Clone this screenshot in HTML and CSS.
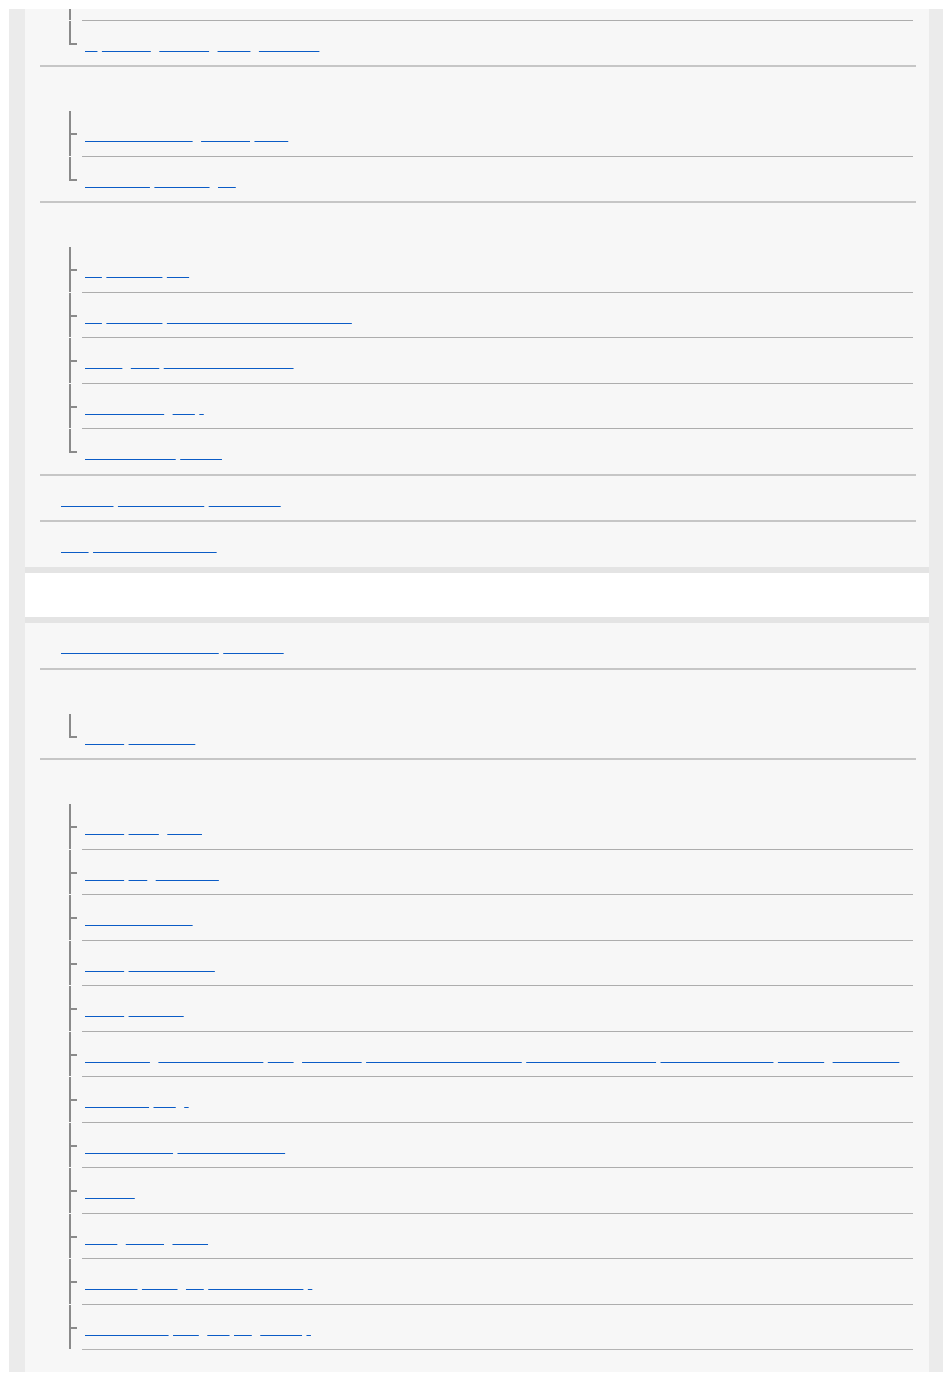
FILE: index.html
```html
<!DOCTYPE html>
<html lang="en">
<head>
    <meta charset="UTF-8">
    <meta name="viewport" content="width=device-width, initial-scale=1.0">
    <title>Help Guide - Contents</title>
    <link rel="stylesheet" href="styles.css">
</head>
<body>
    <div class="frame">
        <div class="panel panel-top">
            <ul class="toc">
                <li>
                    <ul class="sub">
                        <!-- end of the row above the view -->
                        <li class="tail"></li>
                        <li><a class="link" href="#"><span>Is</span> <span>battery</span> <span class="g">display</span> <span class="g">level</span> <span class="g">indicator</span></a></li>
                    </ul>
                </li>
                <li>
                    <span class="group-title">Charging</span>
                    <ul class="sub">
                        <li><a class="link" href="#"><span>Charging using</span> <span class="g">battery</span> <span>pack</span></a></li>
                        <li><a class="link" href="#"><span>Charging</span> <span>settings</span> <span class="g">on</span></a></li>
                    </ul>
                </li>
                <li>
                    <span class="group-title">Computer</span>
                    <ul class="sub">
                        <li><a class="link" href="#"><span>To</span> <span>connect</span> <span>the</span></a></li>
                        <li><a class="link" href="#"><span>To</span> <span>connect</span> <span>a computer via USB cable</span></a></li>
                        <li><a class="link" href="#"><span>Copy</span> <span class="g">files</span> <span>from the computer</span></a></li>
                        <li><a class="link" href="#"><span>Disconnect</span> <span class="g">the</span> <span>.</span></a></li>
                        <li><a class="link" href="#"><span>Notes on the</span> <span>music</span></a></li>
                    </ul>
                </li>
                <li><a class="link" href="#"><span>Playing</span> <span>downloaded</span> <span>from a PC</span></a></li>
                <li><a class="link" href="#"><span>The</span> <span>playback screens</span></a></li>
            </ul>
        </div>

        <h2 class="section-title">Basic operation</h2>

        <div class="panel panel-bottom">
            <ul class="toc">
                <li><a class="link" href="#"><span>Troubleshooting guide</span> <span>contents</span></a></li>
                <li>
                    <span class="group-title">Getting started</span>
                    <ul class="sub">
                        <li><a class="link" href="#"><span>Basic</span> <span>operation</span></a></li>
                    </ul>
                </li>
                <li>
                    <span class="group-title">Playback</span>
                    <ul class="sub cont">
                        <li><a class="link" href="#"><span>Basic</span> <span>hold</span> <span class="g">state</span></a></li>
                        <li><a class="link" href="#"><span>Basic</span> <span>for</span> <span class="g">playback</span></a></li>
                        <li><a class="link" href="#"><span>Connecting the</span></a></li>
                        <li><a class="link" href="#"><span>Basic</span> <span>adjustments</span></a></li>
                        <li><a class="link" href="#"><span>Basic</span> <span>settings</span></a></li>
                        <li><a class="link" href="#"><span>Charging</span> <span class="g">battery life and</span> <span>use</span> <span class="g">cautions</span> <span>when using the player</span> <span>cold environments</span> <span>or high humidity</span> <span>places</span> <span class="g">outdoors.</span></a></li>
                        <li><a class="link" href="#"><span>Updating</span> <span>the</span> <span class="g">.</span></a></li>
                        <li><a class="link" href="#"><span>Customizing</span> <span>sound settings.</span></a></li>
                        <li><a class="link" href="#"><span>Alarms</span></a></li>
                        <li><a class="link" href="#"><span>Turn</span> <span class="g">sleep</span> <span class="g">timer</span></a></li>
                        <li><a class="link" href="#"><span>Playing</span> <span>radio</span> <span class="g">on</span> <span>other devices</span> <span>.</span></a></li>
                        <li><a class="link" href="#"><span>Restrictions</span> <span>use</span> <span class="g">the</span> <span>on</span> <span class="g">flights</span> <span>.</span></a></li>
                    </ul>
                </li>
            </ul>
        </div>
    </div>
</body>
</html>
```

FILE: styles.css
```css
* {
    box-sizing: border-box;
}
html, body {
    margin: 0;
}
body {
    padding: 9px 7px 7px 9px;
    background: #fff;
    font-family: "Liberation Sans", Arial, sans-serif;
    font-size: 16px;
    line-height: 22px;
    color: transparent;
}
.frame {
    background: #ebebeb;
    padding: 0 14px 0 16px;
}
.panel {
    background: #f7f7f7;
    overflow: hidden;
}
.panel-top {
    border-bottom: 6px solid #e4e4e4;
}
.panel-bottom {
    border-top: 6px solid #e4e4e4;
    padding-bottom: 22px;
}
.section-title {
    margin: 0;
    background: #fff;
    font-size: 16px;
    font-weight: normal;
    line-height: 22px;
    padding: 9px 21px 13.5px 36px;
}
.toc {
    list-style: none;
    margin: 0 13px 0 15px;
    padding: 0;
}
.toc > li {
    border-bottom: 2px solid #c6c6c6;
}
.toc > li:last-child {
    border-bottom: none;
}
.group-title {
    display: block;
    padding: 9px 4px 13px 21px;
}
.link {
    display: block;
    padding: 13px 4px 9.5px 21px;
    color: transparent;
    text-decoration: none;
    white-space: nowrap;
}
.link span {
    text-decoration: underline;
    text-decoration-color: #0b5cc6;
    text-decoration-thickness: 1px;
    text-decoration-skip-ink: none;
}
.link .g {
    margin-left: 4px;
}
.sub {
    list-style: none;
    margin: 0 3px 0 42px;
    padding: 0;
}
.sub > li {
    position: relative;
    border-bottom: 1px solid #adadad;
}
.sub > li:last-child {
    border-bottom: none;
}
.sub > li.tail {
    height: 11.5px;
}
.sub .link {
    padding-left: 3px;
}
/* tree lines */
.sub > li::before {
    content: "";
    position: absolute;
    left: -13px;
    top: 0;
    bottom: 0;
    width: 2px;
    background: #8a8a8a;
}
.sub > li::after {
    content: "";
    position: absolute;
    left: -11px;
    top: 22px;
    width: 6px;
    height: 2px;
    background: #8a8a8a;
}
.sub > li.tail::after {
    display: none;
}
.sub > li:last-child::before {
    bottom: auto;
    height: 24px;
}
.sub.cont > li:last-child {
    border-bottom: 1px solid #b4b4b4;
}
.sub.cont > li:last-child::before {
    bottom: 0;
    height: auto;
}
```
